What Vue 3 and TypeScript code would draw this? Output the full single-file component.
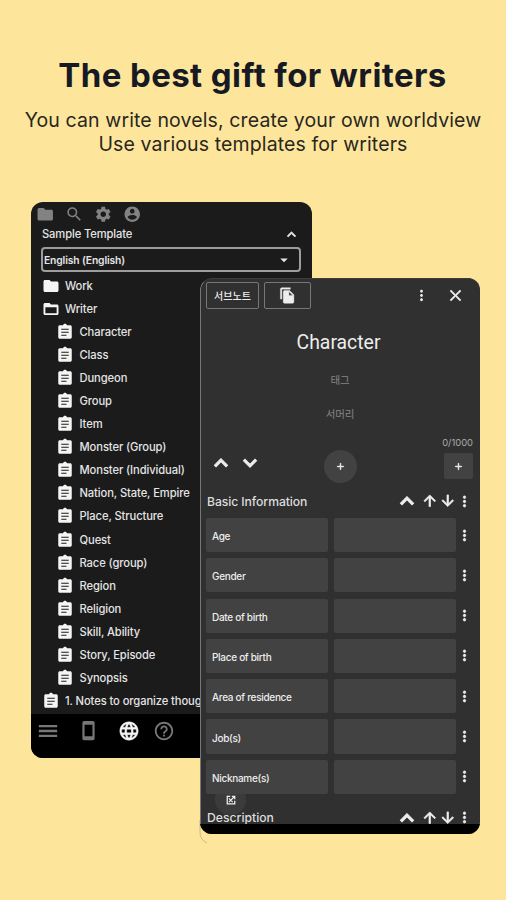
<script setup lang="ts">
interface Row { label: string; icon: 'folder' | 'folderOpen' | 'note'; child?: boolean }

const paths = {
  folder: 'M10 4H4c-1.100 0-2 .9-2 2v12c0 1.100.9 2 2 2h16c1.100 0 2-.9 2-2V8c0-1.100-.9-2-2-2h-8l-2-2z',
  folderOpen: 'M20 6h-8l-2-2H4c-1.100 0-2 .9-2 2v12c0 1.100.9 2 2 2h16c1.100 0 2-.9 2-2V8c0-1.100-.9-2-2-2zm-.5 11.500h-15v-8h15v8z',
  note: 'M19 3h-4.180C14.400 1.840 13.300 1 12 1S9.600 1.840 9.180 3H5c-1.100 0-2 .9-2 2v14c0 1.100.9 2 2 2h14c1.100 0 2-.9 2-2V5c0-1.100-.9-2-2-2zM14 17H7v-1.500h7v1.500zm3-4H7v-1.500h10v1.500zm0-4H7V7.500h10v1.500z',
  search: 'M15.500 14h-.79l-.28-.27A6.470 6.470 0 0 0 16 9.500 6.500 6.500 0 1 0 9.500 16c1.610 0 3.090-.59 4.230-1.570l.27.28v.79l5 4.990L20.490 19l-4.990-5zm-6 0C7.010 14 5 11.990 5 9.500S7.010 5 9.500 5 14 7.010 14 9.500 11.990 14 9.500 14z',
  gear: 'M19.140 12.940c.04-.3.06-.61.06-.94 0-.32-.02-.64-.07-.94l2.030-1.580c.18-.14.23-.41.12-.61l-1.920-3.320c-.12-.22-.37-.29-.59-.22l-2.390.96c-.5-.38-1.030-.7-1.620-.94l-.36-2.540c-.04-.24-.24-.41-.48-.41h-3.840c-.24 0-.43.17-.47.41l-.36 2.540c-.59.24-1.130.57-1.620.94l-2.390-.96c-.22-.08-.47 0-.59.22L2.740 8.870c-.12.21-.08.47.12.61l2.030 1.580c-.05.3-.09.63-.09.94s.02.64.07.94l-2.030 1.580c-.18.14-.23.41-.12.61l1.920 3.320c.12.22.37.29.59.22l2.390-.96c.5.38 1.030.7 1.620.94l.36 2.540c.05.24.24.41.48.41h3.840c.24 0 .44-.17.47-.41l.36-2.540c.59-.24 1.130-.56 1.620-.94l2.390.96c.22.08.47 0 .59-.22l1.920-3.320c.12-.22.07-.47-.12-.61l-2.010-1.580zM12 15.600c-1.980 0-3.600-1.620-3.600-3.600s1.620-3.600 3.600-3.600 3.600 1.620 3.600 3.600-1.620 3.600-3.600 3.600z',
  person: 'M12 2C6.480 2 2 6.480 2 12s4.480 10 10 10 10-4.480 10-10S17.520 2 12 2zm0 3c1.660 0 3 1.340 3 3s-1.340 3-3 3-3-1.340-3-3 1.340-3 3-3zm0 14.200c-2.500 0-4.710-1.280-6-3.220.03-1.990 4-3.080 6-3.080 1.990 0 5.970 1.090 6 3.080-1.290 1.940-3.500 3.220-6 3.220z',
  up: 'M12 8l-6 6 1.410 1.410L12 10.830l4.590 4.580L18 14z',
  down: 'M16.590 8.590L12 13.170 7.410 8.590 6 10l6 6 6-6z',
  caret: 'M7 10l5 5 5-5z',
  copy: 'M16 1H4c-1.100 0-2 .9-2 2v14h2V3h12V1zm-1 4l6 6v10c0 1.100-.9 2-2 2H7.990C6.890 23 6 22.100 6 21V7c0-1.100.89-2 1.990-2h7zm-1 7h5.500L14 6.500V12z',
  dots: 'M12 8c1.100 0 2-.9 2-2s-.9-2-2-2-2 .9-2 2 .9 2 2 2zm0 2c-1.100 0-2 .9-2 2s.9 2 2 2 2-.9 2-2-.9-2-2-2zm0 6c-1.100 0-2 .9-2 2s.9 2 2 2 2-.9 2-2-.9-2-2-2z',
  close: 'M19 6.410L17.590 5 12 10.590 6.410 5 5 6.410 10.590 12 5 17.590 6.410 19 12 13.410 17.590 19 19 17.590 13.410 12z',
  arrowUp: 'M4 12l1.410 1.410L11 7.830V20h2V7.830l5.580 5.590L20 12l-8-8-8 8z',
  arrowDown: 'M20 12l-1.410-1.410L13 16.170V4h-2v12.170l-5.580-5.590L4 12l8 8 8-8z',
  plus: 'M19 13h-6v6h-2v-6H5v-2h6V5h2v6h6v2z',
  menu: 'M2 18.500h20V16H2v2.500zm0-5.250h20v-2.500H2v2.500zM2 5.500V8h20V5.500H2z',
  phone: 'M17 1H7c-1.100 0-2 .9-2 2v18c0 1.100.9 2 2 2h10c1.100 0 2-.9 2-2V3c0-1.100-.9-2-2-2zm-.5 17.500h-9v-13h9v13z',
  globe: 'M11.990 2C6.470 2 2 6.480 2 12s4.470 10 9.990 10C17.520 22 22 17.520 22 12S17.520 2 11.990 2zm6.930 6h-2.950c-.32-1.250-.78-2.450-1.380-3.560 1.840.63 3.370 1.910 4.330 3.560zM12 4.040c.83 1.200 1.480 2.530 1.910 3.960h-3.820c.43-1.430 1.080-2.760 1.910-3.960zM4.260 14C4.100 13.360 4 12.690 4 12s.1-1.360.26-2h3.380c-.08.66-.14 1.320-.14 2s.06 1.340.14 2H4.260zm.82 2h2.950c.32 1.250.78 2.450 1.380 3.560-1.840-.63-3.370-1.900-4.330-3.560zm2.950-8H5.080c.96-1.660 2.490-2.930 4.330-3.560C8.810 5.550 8.350 6.750 8.030 8zM12 19.960c-.83-1.200-1.480-2.530-1.910-3.960h3.820c-.43 1.430-1.080 2.760-1.910 3.960zM14.340 14H9.660c-.09-.66-.16-1.320-.16-2s.07-1.350.16-2h4.680c.09.65.16 1.320.16 2s-.07 1.340-.16 2zm.25 5.560c.6-1.110 1.060-2.310 1.380-3.560h2.950c-.96 1.650-2.490 2.930-4.330 3.560zM16.360 14c.08-.66.14-1.320.14-2s-.06-1.340-.14-2h3.380c.16.64.26 1.310.26 2s-.1 1.360-.26 2h-3.380z',
  help: 'M11 18h2v-2h-2v2zm1-16C6.480 2 2 6.480 2 12s4.480 10 10 10 10-4.480 10-10S17.520 2 12 2zm0 18c-4.410 0-8-3.590-8-8s3.590-8 8-8 8 3.590 8 8-3.590 8-8 8zm0-14c-2.210 0-4 1.790-4 4h2c0-1.100.9-2 2-2s2 .9 2 2c0 2-3 1.750-3 5h2c0-2.250 3-2.500 3-5 0-2.210-1.790-4-4-4z',
}

const notes: string[] = [
  'Character', 'Class', 'Dungeon', 'Group', 'Item', 'Monster (Group)', 'Monster (Individual)',
  'Nation, State, Empire', 'Place, Structure', 'Quest', 'Race (group)', 'Region', 'Religion',
  'Skill, Ability', 'Story, Episode', 'Synopsis',
]
const rows: Row[] = [
  { label: 'Work', icon: 'folder' },
  { label: 'Writer', icon: 'folderOpen' },
  ...notes.map((label): Row => ({ label, icon: 'note', child: true })),
  { label: '1. Notes to organize thoughts', icon: 'note' },
]
const fields: string[] = ['Age', 'Gender', 'Date of birth', 'Place of birth', 'Area of residence', 'Job(s)', 'Nickname(s)']
</script>

<template>
  <main class="poster">
    <h1>The best gift for writers</h1>
    <p class="lead">You can write novels, create your own worldview<br>Use various templates for writers</p>

    <section class="window tree">
      <div class="tools">
        <svg viewBox="0 0 24 24"><path :d="paths.folder" /></svg>
        <svg viewBox="0 0 24 24"><path :d="paths.search" /></svg>
        <svg viewBox="0 0 24 24"><path :d="paths.gear" /></svg>
        <svg viewBox="0 0 24 24"><path :d="paths.person" /></svg>
      </div>
      <div class="heading"><span>Sample Template</span><svg viewBox="0 0 24 24"><path :d="paths.up" /></svg></div>
      <div class="select"><span>English (English)</span><svg viewBox="0 0 24 24"><path :d="paths.caret" /></svg></div>
      <ul>
        <li v-for="row in rows" :key="row.label" :class="{ child: row.child }">
          <svg viewBox="0 0 24 24"><path :d="paths[row.icon]" /></svg><span>{{ row.label }}</span>
        </li>
      </ul>
      <nav>
        <svg class="menu" viewBox="0 0 24 24"><path :d="paths.menu" /></svg>
        <svg class="phone" viewBox="0 0 24 24"><path :d="paths.phone" /></svg>
        <svg class="globe" viewBox="0 0 24 24"><path :d="paths.globe" /></svg>
        <svg class="help" viewBox="0 0 24 24"><path :d="paths.help" /></svg>
      </nav>
    </section>

    <svg class="curl" viewBox="0 0 12 24"><path d="M1 0V12Q1 20 8 23" /></svg>
    <section class="window sheet">
      <header>
        <button class="sub">서브노트</button>
        <button class="copy"><svg viewBox="0 0 24 24"><path :d="paths.copy" /></svg></button>
        <svg class="more" viewBox="0 0 24 24"><path :d="paths.dots" /></svg>
        <svg class="close" viewBox="0 0 24 24"><path :d="paths.close" /></svg>
      </header>
      <h2>Character</h2>
      <p class="hint">태그</p>
      <p class="hint summary">서머리</p>
      <p class="count">0/1000</p>
      <div class="controls">
        <svg class="chev" viewBox="0 0 24 24"><path :d="paths.up" /></svg>
        <svg class="chev" viewBox="0 0 24 24"><path :d="paths.down" /></svg>
        <span class="round"><svg viewBox="0 0 24 24"><path :d="paths.plus" /></svg></span>
        <span class="square"><svg viewBox="0 0 24 24"><path :d="paths.plus" /></svg></span>
      </div>
      <div class="group">
        <h3 class="basic">Basic Information</h3>
        <svg class="chev" viewBox="0 0 24 24"><path :d="paths.up" /></svg>
        <svg class="arrow" viewBox="0 0 24 24"><path :d="paths.arrowUp" /></svg>
        <svg class="arrow" viewBox="0 0 24 24"><path :d="paths.arrowDown" /></svg>
        <svg class="dots" viewBox="0 0 24 24"><path :d="paths.dots" /></svg>
      </div>
      <div class="fields">
        <div v-for="field in fields" :key="field" class="field">
          <span class="box">{{ field }}</span><span class="box"></span>
          <svg class="dots" viewBox="0 0 24 24"><path :d="paths.dots" /></svg>
        </div>
      </div>
      <span class="expand"><svg viewBox="0 0 12 12"><path d="M5 1.500H1.500V10.500H10.500V7M7 1.500H10.500V5M10.500 1.500L3.500 8.500M3.500 4L8 8.500" /></svg></span>
      <div class="group last">
        <h3>Description</h3>
        <svg class="chev" viewBox="0 0 24 24"><path :d="paths.up" /></svg>
        <svg class="arrow" viewBox="0 0 24 24"><path :d="paths.arrowUp" /></svg>
        <svg class="arrow" viewBox="0 0 24 24"><path :d="paths.arrowDown" /></svg>
        <svg class="dots" viewBox="0 0 24 24"><path :d="paths.dots" /></svg>
      </div>
      <footer></footer>
    </section>
  </main>
</template>

<style>
body { margin: 0; background: #fde69b; }
</style>

<style scoped>
* { box-sizing: border-box; margin: 0; padding: 0; }
.poster { position: relative; width: 506px; height: 900px; overflow: hidden; padding-top: 54px; background: #fde69b; font-family: Inter, "Noto Sans CJK KR", sans-serif; }
svg { display: block; flex: none; fill: currentColor; }
h1 { height: 42px; line-height: 42px; text-align: center; font-size: 33px; font-weight: 700; letter-spacing: .4px; color: #171923; white-space: nowrap; padding-right: 1px; }
.lead { margin-top: 13px; line-height: 23.500px; font-size: 19.500px; letter-spacing: .12px; text-align: center; color: #29261e; white-space: nowrap; }
.window { position: absolute; width: 281px; height: 556px; border-radius: 12px; overflow: hidden; display: flex; flex-direction: column; }
.tree { left: 31px; top: 202px; background: #1b1b1b; color: #e4e4e4; }
.tools { display: flex; gap: 10.500px; padding: 3px 0 0 5px; color: #828282; }
.tools svg { width: 18.500px; height: 18.500px; }
.heading { display: flex; align-items: center; justify-content: space-between; height: 21px; padding: 0 12px 0 11px; font-size: 11.200px; letter-spacing: -.12px; font-weight: 500; }
.heading svg { width: 17px; height: 17px; stroke: currentColor; }
.select { display: flex; align-items: center; justify-content: space-between; height: 25px; margin: 2.500px 11px 0 10px; padding: 0 6px 0 1px; border: 2px solid #9d9d9d; border-radius: 4px; font-size: 10.300px; letter-spacing: -.12px; font-weight: 600; }
.select svg { width: 18px; height: 18px; }
ul { list-style: none; padding: 2.500px 0 0 11px; height: 442px; flex: none; }
li { display: flex; align-items: center; gap: 5px; height: 23.050px; font-size: 11.200px; letter-spacing: -.1px; font-weight: 500; white-space: nowrap; }
li svg { width: 18px; height: 18px; color: #f5f5f5; }
li.child { padding-left: 14px; }
li.child span { margin-left: .5px; }
nav { display: flex; align-items: center; flex: 1; background: #000; color: #777; padding: 0 0 11px 6px; }
.menu { width: 22px; height: 22px; }
.phone { width: 21px; height: 21px; margin-left: 19px; }
.globe { width: 22px; height: 22px; margin-left: 19px; color: #f5f5f5; stroke: currentColor; stroke-width: .5; }
.help { width: 22px; height: 22px; margin-left: 13px; }
.curl { position: absolute; left: 199px; top: 820px; width: 12px; height: 24px; fill: none; stroke: #c9bb87; stroke-width: 1; }
.sheet { left: 200px; top: 278px; width: 280px; background: #303030; color: #ededed; }
.sheet::after { content: ""; position: absolute; inset: 0 0 10px; border-left: 1px solid #777; border-top: 1px solid #3c3c3c; border-radius: 12px 12px 0 0; pointer-events: none; }
header { display: flex; align-items: center; height: 34px; padding-left: 6px; flex: none; }
button { display: flex; align-items: center; justify-content: center; height: 27px; border: 1.500px solid #777; border-radius: 2px; background: transparent; color: inherit; font: 500 10px Inter, "Noto Sans CJK KR", sans-serif; }
.sub { width: 53px; }
.copy { width: 47px; margin-left: 5px; }
.copy svg { width: 17px; height: 17px; stroke: currentColor; stroke-width: .6; }
.more { width: 17px; height: 17px; margin-left: 101.500px; }
.close { width: 19px; height: 19px; margin-left: 16.500px; stroke: currentColor; stroke-width: .6; }
h2 { margin-top: 17px; height: 28px; font: 400 19.400px/28px Roboto, sans-serif; text-align: center; padding-right: 3px; }
.hint { height: 16px; line-height: 16px; margin-top: 16px; text-align: center; font-size: 10.500px; color: #858585; letter-spacing: -.1px; }
.summary { margin-top: 18px; }
.count { height: 12px; line-height: 12px; margin-top: 14px; padding-right: 7px; text-align: right; font-size: 9.400px; color: #aaa; }
.controls { display: flex; align-items: center; height: 34px; margin-top: 0; padding-left: 8px; margin-bottom: 6px; flex: none; }
.controls .chev { width: 26px; height: 26px; margin: -6px 3px 0 0; stroke: currentColor; }
.round, .square { display: grid; place-items: center; background: #424242; }
.round { width: 33px; height: 33px; margin-left: 57.500px; border-radius: 50%; }
.square { width: 29px; height: 26px; margin-left: 87.500px; border-radius: 2px; }
.round svg, .square svg { width: 11px; height: 11px; stroke: currentColor; }
.group { display: flex; align-items: center; height: 24px; padding: 0 7px; flex: none; }
h3 { flex: 1; font-size: 12.200px; font-weight: 500; white-space: nowrap; color: #ddd; }
.basic { letter-spacing: -.08px; }
.group .chev { width: 26px; height: 26px; margin-right: 1.500px; stroke: currentColor; }
.arrow { width: 17.500px; height: 17.500px; stroke: currentColor; }
.dots { width: 17px; height: 17px; stroke: currentColor; stroke-width: .5; }
.fields { display: flex; flex-direction: column; gap: 6.100px; padding: 5px 7px 0 6px; flex: none; }
.field { display: flex; align-items: center; height: 34.200px; }
.box { display: flex; align-items: center; width: 121.500px; height: 100%; margin-right: 6.500px; padding: 2px 0 0 6px; border-radius: 2px; background: #424242; font-size: 10px; letter-spacing: -.3px; font-weight: 500; white-space: nowrap; }
.box + .box { margin-right: 0; }
.expand { position: absolute; left: 15px; top: 506px; display: grid; place-items: center; width: 31px; height: 31px; border-radius: 50%; background: #3b3b3b; clip-path: inset(10px 0 0); }
.expand svg { width: 10px; height: 10px; fill: none; stroke: #eee; stroke-width: 1.500; }
.last { margin-top: 12px; position: relative; }
footer { position: absolute; inset: auto 0 0; height: 10px; background: #000; }
</style>
